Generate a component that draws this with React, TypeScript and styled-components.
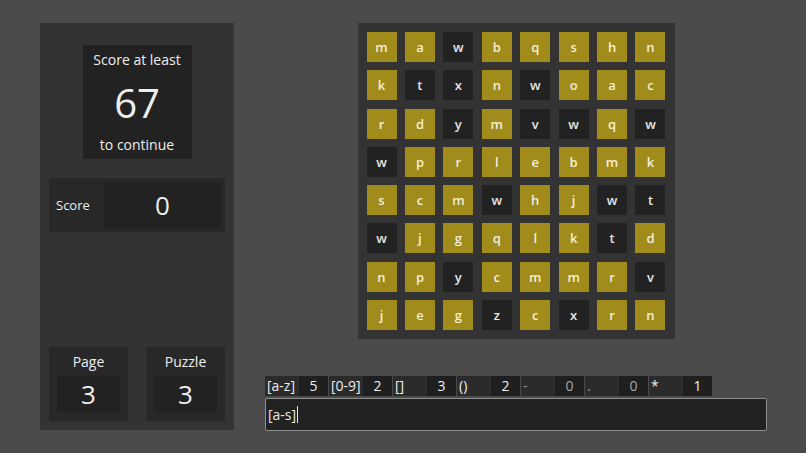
import React from "react";
import styled, { createGlobalStyle } from "styled-components";

const Global = createGlobalStyle`
  html, body { margin: 0; padding: 0; background: #4b4b4b; }
  body { font-family: "Open Sans", "Noto Sans", sans-serif; font-weight: 500; color: #eeeeee; }
`;

const Page = styled.div`
  width: 806px;
  height: 453px;
  box-sizing: border-box;
  padding: 23px 0 0 40px;
  display: flex;
  align-items: flex-start;
`;

const LeftPanel = styled.div`
  width: 194px;
  height: 407px;
  background: #333333;
  box-sizing: border-box;
  padding: 22px 9px 9px 9px;
  display: flex;
  flex-direction: column;
  align-items: center;
`;

const GoalBox = styled.div`
  width: 109px;
  height: 114px;
  background: #222222;
  box-sizing: border-box;
  padding: 5px 0 4px;
  display: flex;
  flex-direction: column;
  align-items: center;
  justify-content: space-between;
`;

const GoalText = styled.div`
  font-size: 14px;
  line-height: 20px;
`;

const GoalNumber = styled.div`
  font-size: 40px;
  line-height: 44px;
`;

const ScoreRow = styled.div`
  margin-top: 19px;
  width: 176px;
  height: 54px;
  background: #282828;
  box-sizing: border-box;
  padding: 4px 4px 4px 7px;
  display: flex;
  align-items: stretch;
`;

const ScoreLabel = styled.div`
  width: 48px;
  font-size: 13px;
  display: flex;
  align-items: center;
`;

const ScoreValue = styled.div`
  flex: 1;
  background: #222222;
  font-size: 26px;
  display: flex;
  align-items: center;
  justify-content: center;
`;

const Spacer = styled.div`
  flex: 1;
`;

const InfoRow = styled.div`
  width: 176px;
  display: flex;
  justify-content: space-between;
`;

const InfoBox = styled.div`
  width: 79px;
  height: 74px;
  background: #282828;
  box-sizing: border-box;
  padding: 4px 8px 8px;
  display: flex;
  flex-direction: column;
  align-items: center;
`;

const InfoLabel = styled.div`
  font-size: 14px;
  line-height: 22px;
  margin-bottom: 3px;
`;

const InfoValue = styled.div`
  width: 100%;
  height: 36px;
  background: #222222;
  font-size: 26px;
  display: flex;
  align-items: center;
  justify-content: center;
`;

const RightColumn = styled.div`
  margin-left: 31px;
  width: 502px;
  height: 408px;
  display: flex;
  flex-direction: column;
  align-items: center;
`;

const Board = styled.div`
  width: 317px;
  height: 316px;
  background: #333333;
  box-sizing: border-box;
  padding: 9px;
  display: grid;
  grid-template-columns: repeat(8, 30px);
  grid-template-rows: repeat(8, 30px);
  justify-content: space-between;
  align-content: space-between;
`;

const Tile = styled.div<{ $on: boolean }>`
  width: 30px;
  height: 30px;
  background: ${(p) => (p.$on ? "#a08b1b" : "#222222")};
  color: ${(p) => (p.$on ? "#f4efd8" : "#e6e6e6")};
  font-size: 13px;
  font-weight: 600;
  display: flex;
  align-items: center;
  justify-content: center;
`;

const Counters = styled.div`
  margin-top: 37px;
  width: 502px;
  height: 20px;
  display: flex;
`;

const Group = styled.div`
  width: 64px;
  height: 20px;
  display: flex;
  padding-right: 1px;
  box-sizing: border-box;
`;

const GroupLabel = styled.div<{ $dim: boolean }>`
  width: 34px;
  background: #2b2b2b;
  color: ${(p) => (p.$dim ? "#9a9a9a" : "#eeeeee")};
  font-size: 14px;
  line-height: 20px;
  padding-left: 2px;
  box-sizing: border-box;
  white-space: nowrap;
`;

const GroupValue = styled.div<{ $dim: boolean }>`
  flex: 1;
  background: #1f1f1f;
  color: ${(p) => (p.$dim ? "#a8a8a8" : "#eeeeee")};
  font-size: 14px;
  line-height: 20px;
  text-align: center;
`;

const InputBox = styled.div`
  margin-top: 2px;
  width: 502px;
  height: 33px;
  box-sizing: border-box;
  border: 1px solid #8e8e8e;
  border-radius: 2px;
  background: #222222;
  padding-left: 2px;
  display: flex;
  align-items: center;
  font-size: 14px;
  color: #e8e8e8;
`;

const Caret = styled.span`
  display: inline-block;
  width: 1px;
  height: 17px;
  background: #e8e8e8;
  margin-left: 1px;
`;

const rows = [
  "mawbqshn",
  "ktxnwoac",
  "rdymvwqw",
  "wprlebmk",
  "scmwhjwt",
  "wjgqlktd",
  "npycmmrv",
  "jegzcxrn",
];
const onMask = [
  "11011111",
  "10010111",
  "11010010",
  "01111111",
  "11101100",
  "01111101",
  "11011110",
  "11101011",
];

const counters = [
  { label: "[a-z]", value: 5 },
  { label: "[0-9]", value: 2 },
  { label: "[]", value: 3 },
  { label: "()", value: 2 },
  { label: "-", value: 0 },
  { label: ".", value: 0 },
  { label: "*", value: 1 },
];

export default function App() {
  return (
    <>
      <Global />
      <Page>
        <LeftPanel>
          <GoalBox>
            <GoalText>Score at least</GoalText>
            <GoalNumber>67</GoalNumber>
            <GoalText>to continue</GoalText>
          </GoalBox>
          <ScoreRow>
            <ScoreLabel>Score</ScoreLabel>
            <ScoreValue>0</ScoreValue>
          </ScoreRow>
          <Spacer />
          <InfoRow>
            <InfoBox>
              <InfoLabel>Page</InfoLabel>
              <InfoValue>3</InfoValue>
            </InfoBox>
            <InfoBox>
              <InfoLabel>Puzzle</InfoLabel>
              <InfoValue>3</InfoValue>
            </InfoBox>
          </InfoRow>
        </LeftPanel>
        <RightColumn>
          <Board>
            {rows.map((r, i) =>
              r.split("").map((ch, j) => (
                <Tile key={`${i}-${j}`} $on={onMask[i][j] === "1"}>
                  {ch}
                </Tile>
              ))
            )}
          </Board>
          <Counters>
            {counters.map((c) => (
              <Group key={c.label}>
                <GroupLabel $dim={c.value === 0}>{c.label}</GroupLabel>
                <GroupValue $dim={c.value === 0}>{c.value}</GroupValue>
              </Group>
            ))}
          </Counters>
          <InputBox>
            [a-s]
            <Caret />
          </InputBox>
        </RightColumn>
      </Page>
    </>
  );
}
